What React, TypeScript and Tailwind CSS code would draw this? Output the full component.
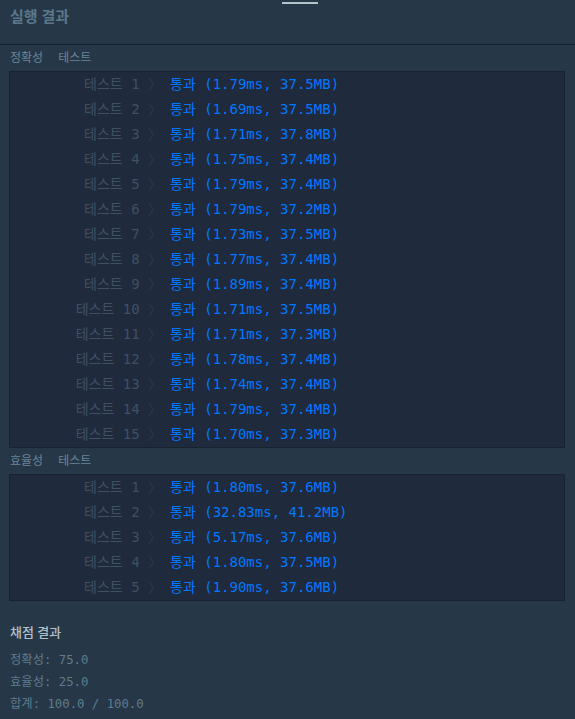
import React from "react";

const acc: [string, string][] = [
  ["1", "1.79ms, 37.5MB"],
  ["2", "1.69ms, 37.5MB"],
  ["3", "1.71ms, 37.8MB"],
  ["4", "1.75ms, 37.4MB"],
  ["5", "1.79ms, 37.4MB"],
  ["6", "1.79ms, 37.2MB"],
  ["7", "1.73ms, 37.5MB"],
  ["8", "1.77ms, 37.4MB"],
  ["9", "1.89ms, 37.4MB"],
  ["10", "1.71ms, 37.5MB"],
  ["11", "1.71ms, 37.3MB"],
  ["12", "1.78ms, 37.4MB"],
  ["13", "1.74ms, 37.4MB"],
  ["14", "1.79ms, 37.4MB"],
  ["15", "1.70ms, 37.3MB"],
];

const eff: [string, string][] = [
  ["1", "1.80ms, 37.6MB"],
  ["2", "32.83ms, 41.2MB"],
  ["3", "5.17ms, 37.6MB"],
  ["4", "1.80ms, 37.5MB"],
  ["5", "1.90ms, 37.6MB"],
];

const mono = "font-['DejaVu_Sans_Mono','Noto_Sans_CJK_KR',monospace]";
const sans = "font-['Noto_Sans','Noto_Sans_CJK_KR',sans-serif]";

function Box({ rows }: { rows: [string, string][] }) {
  return (
    <div className={`ml-[9px] mr-[10px] border border-[#182231] bg-[#1f2a3c] ${mono} text-[14px]`}>
      {rows.map(([n, r]) => (
        <div key={n} className="flex h-[25px] items-center whitespace-pre">
          <div className="w-[152px] text-right text-[#3f5063]">
            테스트 {n} <span className="text-[#2d3a4c]">〉</span>
          </div>
          <div className="pl-[8px] text-[#0078ff]">통과 ({r})</div>
        </div>
      ))}
    </div>
  );
}

function Label({ text }: { text: string }) {
  return (
    <div className={`flex h-[26px] items-center pl-[10px] text-[12px] text-[#6a8598] ${sans}`}>
      <span>{text}</span>
      <span className="ml-[15px]">테스트</span>
    </div>
  );
}

export default function App() {
  return (
    <div className="min-h-screen w-full bg-[#263747]">
      <div className="relative h-[45px] border-b border-[#172231]">
        <div className="absolute left-[282px] top-[2px] h-[2px] w-[36px] bg-[#b4c2ca]" />
        <div className={`pl-[10px] pt-[5px] text-[15px] font-bold text-[#5b7789] ${sans}`}>실행 결과</div>
      </div>
      <Label text="정확성" />
      <Box rows={acc} />
      <Label text="효율성" />
      <Box rows={eff} />
      <div className={`pl-[10px] pt-[22px] text-[13px] font-medium text-[#b3c0c8] ${sans}`}>채점 결과</div>
      <div className={`mt-[6px] pl-[10px] text-[12.3px] leading-[22px] text-[#5f7c8e] ${mono}`}>
        <div>정확성: 75.0</div>
        <div>효율성: 25.0</div>
        <div>합계: 100.0 / 100.0</div>
      </div>
    </div>
  );
}
